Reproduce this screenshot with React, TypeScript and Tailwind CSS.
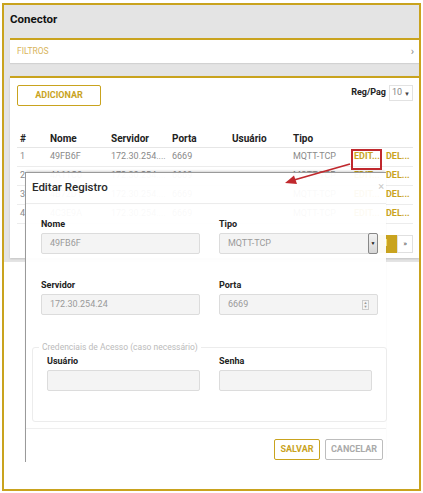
import React from "react";

const gold = "text-[#c9a31e]";

const rows = [
  { id: 1, nome: "49FB6F", servidor: "172.30.254....", porta: "6669", usuario: "", tipo: "MQTT-TCP" },
  { id: 2, nome: "4A11C0", servidor: "172.30.254....", porta: "6669", usuario: "", tipo: "MQTT-TCP" },
  { id: 3, nome: "4B72D1", servidor: "172.30.254....", porta: "6669", usuario: "", tipo: "MQTT-TCP" },
  { id: 4, nome: "4C3E9A", servidor: "172.30.254....", porta: "6669", usuario: "", tipo: "MQTT-TCP" },
];

const cols = "grid grid-cols-[30px_61px_61px_60px_61px_61px_32px_1fr]";

function Field(props: any) {
  const { label, value = "", w = "w-[159px]", right = null } = props;
  return (
    <div className="flex flex-col">
      <div className="mb-[3px] h-[12px] text-[9px] font-bold leading-[12px] text-[#222]">
        {label}
      </div>
      <div
        className={`relative flex h-[21px] ${w} items-center rounded-[2px] border border-[#dcdcdc] bg-[#f4f4f4] pl-[8px] text-[9px] text-[#9a9a9a]`}
      >
        {value}
        {right}
      </div>
    </div>
  );
}

export default function App() {
  return (
    <div
      className="relative h-[493px] w-[423px] overflow-hidden bg-white pl-[2px] pt-[3px]"
      style={{ fontFamily: "Roboto, 'Liberation Sans', sans-serif" }}
    >
      {/* ======================================================
          FRAME
      ====================================================== */}
      <div className="h-[488px] w-[419px] overflow-hidden border-2 border-[#c9a31e] bg-white">
        <div className="bg-[#e4e4e4] pb-[4px]">
          {/* TITLE */}
          <div className="h-[33px] pl-[6px] pt-[7px] text-[11.5px] font-bold leading-[14px] text-[#111]">
            Conector
          </div>

          {/* FILTROS */}
          <div className="ml-[6px] flex h-[25px] items-center justify-between border-t-2 border-[#c9a31e] bg-white pl-[7px] pr-[5px] shadow-[0_1px_1px_rgba(0,0,0,0.08)]">
            <span className="text-[8.5px] uppercase text-[#d8b55c]">Filtros</span>
            <span className="text-[11px] leading-none text-[#888]">›</span>
          </div>

          {/* MAIN PANEL */}
          <div className="ml-[6px] mt-[13px] border-t-2 border-[#c9a31e] bg-white pb-[5px] pl-[7px] pr-[6px] pt-[7px] shadow-[0_1px_2px_rgba(0,0,0,0.15)]">
            <div className="flex items-start justify-between">
              <button
                className={`flex h-[21px] w-[84px] items-center justify-center rounded-[2px] border border-[#c9a31e] text-[9px] font-bold ${gold}`}
              >
                ADICIONAR
              </button>

              <div className="flex items-center gap-[3px]">
                <span className="text-[9px] font-bold text-[#222]">Reg/Pag</span>
                <div className="flex h-[16px] w-[24px] items-center justify-between border border-[#e2e2e2] px-[2px] text-[9px] text-[#888]">
                  10
                  <span className="text-[6px] text-[#444]">▼</span>
                </div>
              </div>
            </div>

            {/* TABLE */}
            <div className="mt-[23px]">
              <div className={`${cols} h-[19px] items-center border-b border-[#e6e6e6] pl-[3px] text-[10px] font-bold text-[#222]`}>
                <span>#</span>
                <span>Nome</span>
                <span>Servidor</span>
                <span>Porta</span>
                <span>Usuário</span>
                <span>Tipo</span>
                <span />
                <span />
              </div>

              {rows.map((r) => (
                <div
                  key={r.id}
                  className={`${cols} h-[19px] items-center border-b border-[#ececec] pl-[3px] text-[9px] text-[#8a8a8a]`}
                >
                  <span>{r.id}</span>
                  <span>{r.nome}</span>
                  <span>{r.servidor}</span>
                  <span>{r.porta}</span>
                  <span>{r.usuario}</span>
                  <span>{r.tipo}</span>
                  <span className={`font-bold ${gold}`}>EDIT...</span>
                  <span className={`font-bold ${gold}`}>DEL...</span>
                </div>
              ))}
            </div>

            {/* PAGINATION */}
            <div className="mt-[11px] flex justify-end">
              <div className="flex h-[18px] w-[22px] items-center justify-center bg-[#c9a31e] text-[9px] text-white">
                1
              </div>
              <div className="flex h-[18px] w-[16px] items-center justify-center border border-[#e0e0e0] text-[8px] text-[#555]">
                »
              </div>
            </div>
          </div>
        </div>
      </div>

      {/* ======================================================
          MODAL
      ====================================================== */}
      <div className="absolute left-[25px] top-[172px] h-[290px] w-[361px] border-l border-t border-[#9a9a9a] bg-white/95 shadow-[0_-2px_2px_-1px_rgba(0,0,0,0.18)]">
        {/* HEADER */}
        <div className="flex h-[31px] items-center justify-between border-b border-[#ececec] pl-[6px] pr-[2px]">
          <span className="text-[11.5px] font-medium text-[#2a2a2a]">Editar Registro</span>
          <span className="mb-[4px] text-[11px] leading-none text-[#c8c8c8]">×</span>
        </div>

        {/* BODY */}
        <div>
          <div className="pl-[15px] pt-[14px]">
            <div className="flex gap-[19px]">
              <Field label="Nome" value="49FB6F" />
              <Field
                label="Tipo"
                value="MQTT-TCP"
                right={
                  <div className="absolute right-[-1px] top-[-1px] flex h-[21px] w-[10px] items-center justify-center rounded-[2px] border border-[#888] bg-gradient-to-b from-[#f2f2f2] to-[#d6d6d6] text-[5px] text-[#111]">
                    ▼
                  </div>
                }
              />
            </div>

            <div className="mt-[25px] flex gap-[19px]">
              <Field label="Servidor" value="172.30.254.24" />
              <Field
                label="Porta"
                value="6669"
                right={
                  <div className="absolute right-[8px] top-[5px] flex h-[10px] w-[7px] flex-col items-center justify-center border border-[#ccc] text-[4px] leading-[4px] text-[#999]">
                    <span>▲</span>
                    <span>▼</span>
                  </div>
                }
              />
            </div>
          </div>

          {/* CREDENCIAIS */}
          <fieldset className="ml-[6px] mt-[26px] w-[355px] rounded-[3px] border border-[#ececec] pb-[30px] pl-[6px]">
            <legend className="px-[3px] text-[8.5px] leading-[12px] text-[#bbb]">
              Credenciais de Acesso (caso necessário)
            </legend>
            <div className="mt-[2px] flex gap-[19px] pl-[8px]">
              <Field label="Usuário" w="w-[153px]" />
              <Field label="Senha" w="w-[153px]" />
            </div>
          </fieldset>

          {/* FOOTER */}
          <div className="mt-[6px] flex justify-end gap-[5px] border-t border-[#efefef] pb-[2px] pr-[3px] pt-[10px]">
            <button
              className={`flex h-[21px] w-[46px] items-center justify-center rounded-[2px] border border-[#c9a31e] text-[9px] font-bold ${gold}`}
            >
              SALVAR
            </button>
            <button className="flex h-[21px] w-[58px] items-center justify-center rounded-[2px] border border-[#bdbdbd] text-[9px] font-bold text-[#aaa]">
              CANCELAR
            </button>
          </div>
        </div>
      </div>

      {/* ======================================================
          ANNOTATION
      ====================================================== */}
      <div className="absolute left-[351px] top-[149px] h-[21px] w-[31px] border-2 border-[#c0282d]" />
      <svg
        className="absolute left-0 top-0"
        width="423"
        height="493"
        viewBox="0 0 423 493"
      >
        <line x1="350" y1="164" x2="294" y2="180" stroke="#c0282d" strokeWidth="1.8" />
        <polygon points="285,183 294,175.5 297,184" fill="#c0282d" />
      </svg>
    </div>
  );
}
